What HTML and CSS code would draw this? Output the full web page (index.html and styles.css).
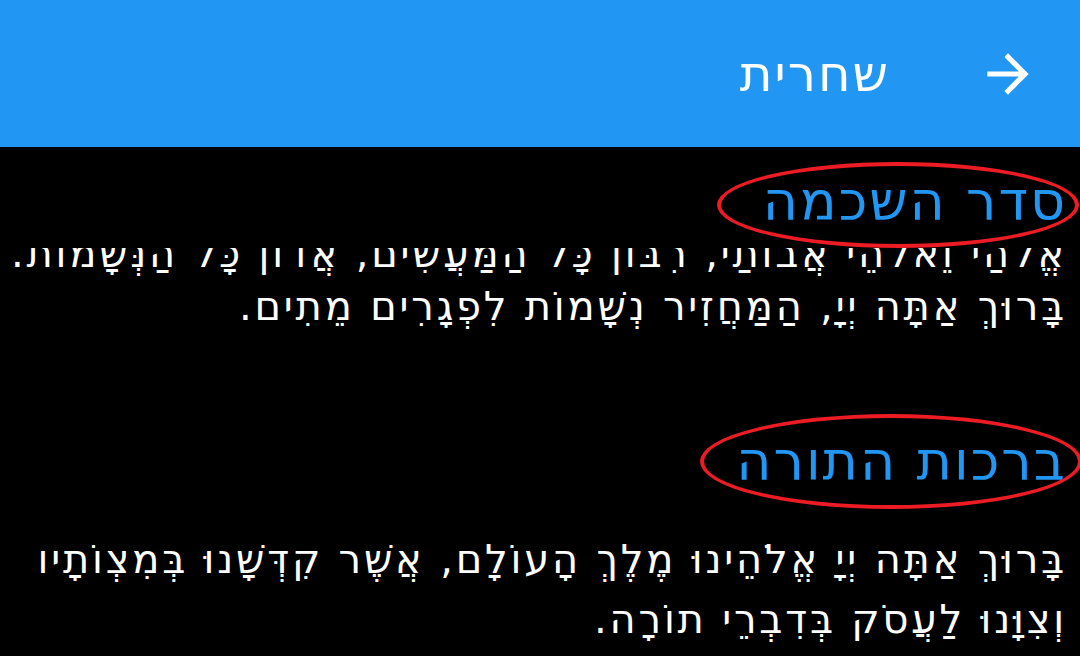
FILE: index.html
```html
<!DOCTYPE html>
<html lang="he" dir="rtl">
<head>
<meta charset="utf-8">
<link rel="stylesheet" href="styles.css">
</head>
<body>
<header class="appbar">
  <svg class="back" viewBox="0 0 24 24" aria-hidden="true"><path d="M12 4l-1.41 1.41L16.17 11H4v2h12.17l-5.58 5.59L12 20l8-8z" fill="#fff"/></svg>
  <h1 class="title">שחרית</h1>
</header>
<main class="content">
  <div class="list">
    <section class="section first">
      <p class="prayer tight">
        <span class="line">אֱלֹהַי וֵאלֹהֵי אֲבוֹתַי, רִבּוֹן כָּל הַמַּעֲשִׂים, אֲדוֹן כָּל הַנְּשָׁמוֹת.</span>
        <span class="line">בָּרוּךְ אַתָּה יְיָ, הַמַּחֲזִיר נְשָׁמוֹת לִפְגָרִים מֵתִים.</span>
      </p>
    </section>
    <section class="section">
      <h2 class="section-title">ברכות התורה</h2>
      <p class="prayer">
        <span class="line">בָּרוּךְ אַתָּה יְיָ אֱלֹהֵינוּ מֶלֶךְ הָעוֹלָם, אֲשֶׁר קִדְּשָׁנוּ בְּמִצְוֹתָיו</span>
        <span class="line">וְצִוָּנוּ לַעֲסֹק בְּדִבְרֵי תוֹרָה.</span>
      </p>
    </section>
  </div>
  <div class="sticky-header"><h2 class="section-title">סדר השכמה</h2></div>
  <div class="mark mark-one"></div>
  <div class="mark mark-two"></div>
</main>
</body>
</html>
```
FILE: styles.css
```css
html, body {
  margin: 0;
  padding: 0;
  background: #000;
}
body {
  width: 1080px;
  height: 656px;
  overflow: hidden;
  font-family: "DejaVu Sans", sans-serif;
  color: #fff;
}
.appbar {
  height: 147px;
  background: #2196F3;
  display: flex;
  align-items: center;
  padding-right: 41px;
  box-sizing: border-box;
}
.back {
  width: 62px;
  height: 62px;
  flex: none;
}
.title {
  margin: 0 87px 0 0;
  font-size: 50px;
  font-weight: 400;
  letter-spacing: 2px;
  color: #fff;
  line-height: 1;
}
.content {
  position: relative;
  height: 509px;
  overflow: hidden;
}
.list {
  padding: 80px 13px 0 13px;
}
.section-title {
  margin: 0;
  font-size: 54px;
  font-weight: 400;
  letter-spacing: 2px;
  color: #2196F3;
  line-height: 70px;
}
.section .section-title {
  margin-bottom: 32px;
}
.prayer {
  margin: 0;
  font-size: 40px;
  letter-spacing: 2.8px;
  line-height: 60px;
}
.prayer.tight {
  line-height: 53px;
}
.line {
  display: block;
  white-space: nowrap;
}
.section {
  margin-bottom: 94px;
}
.sticky-header {
  position: absolute;
  top: 0;
  left: 0;
  right: 0;
  height: 101px;
  background: #000;
  padding: 20px 13px 0 13px;
  box-sizing: border-box;
}
.mark {
  position: absolute;
  border: 4px solid #ED1C24;
  border-radius: 50%;
  box-sizing: border-box;
}
.mark-one {
  left: 717px;
  top: 15px;
  width: 362px;
  height: 86px;
}
.mark-two {
  left: 700px;
  top: 267px;
  width: 382px;
  height: 95px;
}
```
